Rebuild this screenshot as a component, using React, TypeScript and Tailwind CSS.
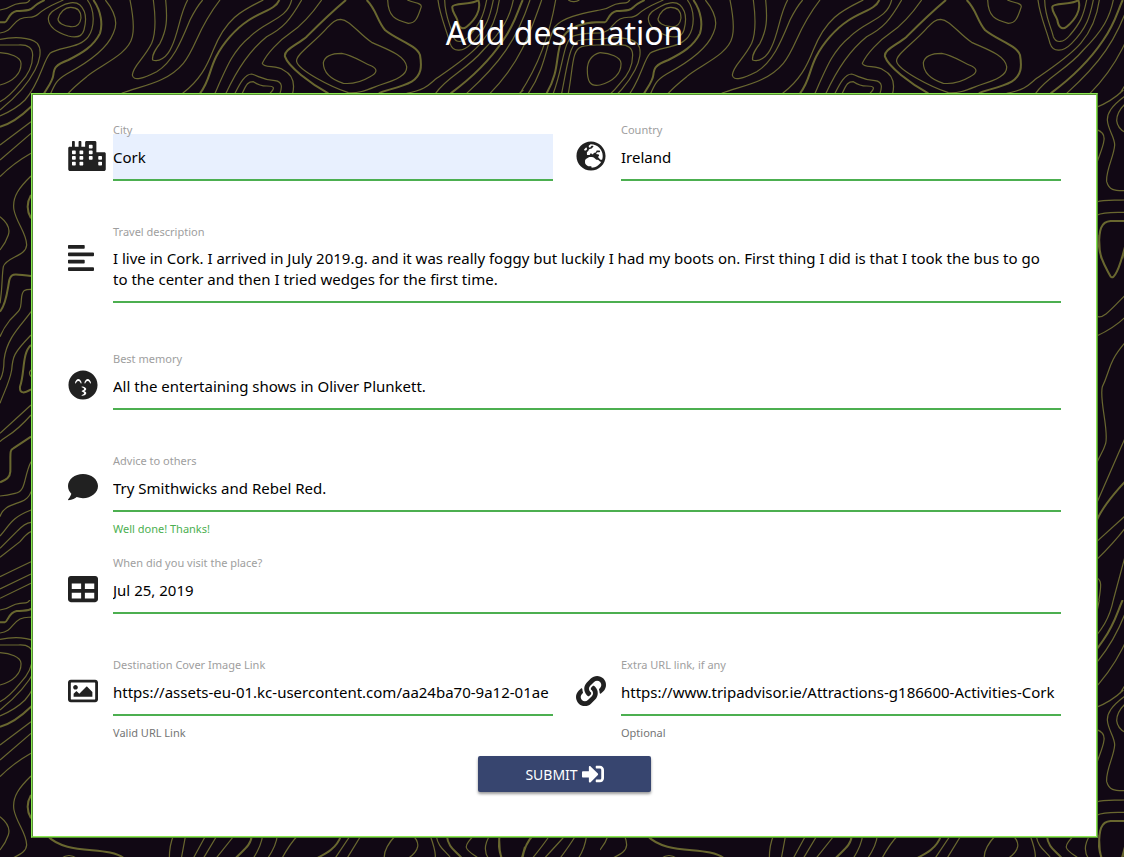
import type { ReactNode } from 'react';
import {
  FaAlignLeft,
  FaCity,
  FaComment,
  FaGlobeEurope,
  FaKissBeam,
  FaLink,
  FaRegImage,
  FaSignInAlt,
  FaTable,
} from 'react-icons/fa';

const thinLines = [
  // upper band
  'M0 30C40 25 30 12 60 10S80 8 90 0',
  'M0 99C35 96 35 70 60 57C85 45 95 60 115 42C140 20 165 12 190 0',
  'M174 57C180 36 195 22 212 22C235 22 243 36 243 54C240 75 230 82 212 80C190 78 174 69 174 57Z',
  'M145 57C145 39 162 30 180 20C200 8 225 3 240 15C258 32 260 60 252 90C246 112 228 114 205 108C175 99 147 82 145 57Z',
  'M0 118C40 110 90 110 112 130C128 150 118 185 105 210C85 250 50 290 0 330',
  'M0 135H55C85 133 98 145 98 165C98 200 85 225 60 250C40 275 20 295 0 305',
  'M0 158C30 160 62 170 63 190C64 220 40 245 0 255',
  'M0 348C30 335 55 320 75 300C120 250 130 180 150 160C180 140 240 145 265 110C285 80 285 30 262 0',
  'M316 0C345 35 355 70 340 100C320 150 260 190 200 222C170 240 165 250 150 285',
  'M390 0C400 50 402 90 397 110C385 165 300 195 260 230C235 250 220 262 203 282',
  'M460 0C468 60 468 100 455 130C430 180 400 195 397 225C400 245 430 235 470 215C520 185 545 120 570 60C580 40 590 20 608 0',
  'M497 0C503 60 500 90 480 130C465 150 455 165 458 180C475 187 500 175 515 140C535 100 540 40 563 0',
  'M365 280C420 258 500 250 550 190C590 140 590 90 660 0',
  'M548 280C600 240 620 200 640 150C680 50 730 30 790 0',
  'M645 280C680 200 700 150 750 110C800 60 860 60 875 0',
  'M678 280C710 210 750 150 800 110C850 85 870 60 905 0',
  'M965 0C930 50 900 80 870 100C840 120 800 160 787 190C790 205 830 195 850 210C880 225 885 250 878 280',
  'M705 280C720 250 735 222 755 222C780 230 790 240 825 242C850 245 845 265 840 280',
  'M727 280C740 250 745 245 760 245C775 255 785 258 800 258C825 258 825 265 810 280',
  'M1022 58C1050 60 1075 100 1115 127C1160 148 1215 165 1220 200C1222 225 1190 240 1140 255C1100 270 1080 280 1045 278C990 260 895 210 890 185C885 165 940 130 980 85C995 70 1005 58 1022 58Z',
  'M970 188C975 165 1000 160 1025 160C1060 165 1090 190 1115 198C1135 208 1130 220 1110 230C1080 248 1050 252 1030 250C1000 240 970 220 970 188Z',
  'M1163 0C1165 50 1185 60 1225 70C1250 70 1255 45 1264 20C1264 8 1245 10 1222 0',
  'M1334 0C1335 50 1350 70 1360 110C1368 130 1390 130 1410 105C1440 70 1450 50 1460 0',
  'M1314 0C1320 50 1340 90 1350 130C1360 160 1390 155 1415 130C1460 85 1470 50 1480 0',
  'M1220 280C1280 270 1290 250 1310 235C1400 170 1480 130 1498 0',
  'M1307 280C1340 230 1400 210 1450 150C1510 90 1530 50 1540 0',
  'M1400 280C1500 190 1550 120 1590 0',
  'M1470 280C1560 190 1590 100 1625 0',
  'M1560 280C1620 190 1650 100 1667 0',
  'M1585 280C1640 200 1640 120 1665 80C1690 50 1750 40 1800 30',
  'M1660 280C1690 200 1690 120 1720 108C1750 98 1770 100 1800 99',
  'M1685 280C1705 180 1710 120 1745 120C1765 116 1780 120 1800 118',
  'M1705 280C1720 200 1715 150 1745 140C1765 134 1780 135 1800 135',
  'M1800 158C1775 165 1762 180 1762 210C1762 240 1768 262 1800 255',
  'M1705 0C1715 8 1730 5 1738 0',
  // left edge
  'M0 435L93 365',
  'M0 480L93 400',
  'M0 530Q40 490 93 460',
  'M93 528C60 560 35 590 42 630C50 670 80 700 80 735C78 770 20 770 10 800C5 830 8 860 0 910',
  'M0 650C25 670 30 690 25 705C20 720 8 740 0 750',
  'M93 868C75 868 68 870 65 890C60 930 70 920 30 960Q10 985 0 1010',
  'M93 935C70 970 20 1010 12 1080C12 1120 5 1130 0 1140',
  'M93 1005C40 1060 38 1070 35 1110C28 1150 10 1180 0 1210',
  'M93 1110Q84 1118 93 1130',
  'M0 1300L93 1215',
  'M0 1325C20 1305 35 1310 93 1245',
  'M93 1385C70 1430 80 1475 45 1480C20 1486 10 1487 0 1488',
  'M0 1550C15 1500 80 1520 93 1475',
  'M0 1608C30 1575 30 1555 93 1530',
  'M0 1645L50 1595Q75 1568 93 1567',
  'M0 1672L60 1625Q80 1600 93 1595',
  'M0 1730Q30 1715 93 1685',
  'M0 1767L93 1722',
  'M0 1795L93 1750',
  // right edge
  'M1482 325Q1535 305 1570 270',
  'M1575 288C1532 320 1522 340 1522 360C1524 390 1544 410 1544 435C1542 470 1517 510 1520 545C1527 570 1542 573 1575 572',
  'M1575 312C1557 330 1550 345 1550 362C1552 380 1562 390 1575 397',
  'M1490 389C1507 395 1514 405 1512 420C1510 440 1500 460 1490 490',
  'M1490 606C1512 598 1542 602 1575 600',
  'M1490 646C1512 635 1542 638 1575 637',
  'M1490 948C1507 960 1532 930 1575 886',
  'M1490 1008Q1540 985 1575 952',
  'M1575 1028C1522 1090 1532 1110 1507 1160C1497 1200 1527 1290 1517 1330C1510 1355 1497 1370 1490 1390',
  'M1575 1315L1490 1510',
  'M1490 1625L1575 1548',
  'M1490 1679Q1540 1630 1575 1585',
  'M1490 1733C1504 1740 1506 1750 1494 1815',
  'M1540 1800L1575 1670',
  // lower band
  'M184 775Q207 758 230 775',
  'M521 705Q508 735 508 775',
  'M557 705L544 775',
  'M618 705L580 775',
  'M652 705L610 775',
  'M704 705L648 775',
  'M788 705Q785 735 760 775',
  'M832 705Q830 735 803 775',
  'M895 705Q870 730 846 775',
  'M1052 705L1005 775',
  'M1084 705L1041 775',
  'M1188 705Q1150 745 1153 775',
  'M1237 705Q1275 740 1225 775',
  'M1290 705Q1310 760 1305 775',
  'M1308 705C1315 745 1335 750 1353 775',
  'M1424 705C1380 745 1400 750 1436 775',
  'M1470 705Q1445 745 1465 775',
  'M1650 705Q1630 735 1597 775',
  'M1697 705Q1670 735 1633 775',
  'M1728 705Q1710 735 1680 775',
  'M1760 705Q1755 745 1735 775',
];

const thickLines = [
  'M0 67H14C25 65 24 38 50 33C75 30 85 36 102 20C112 10 120 8 134 0',
  'M280 0C305 35 308 75 300 100C280 140 245 160 205 180C165 195 162 205 160 225C158 245 140 265 130 285L93 320C60 352 30 372 0 380',
  'M600 280C640 230 620 190 690 110C760 30 820 40 838 0',
  'M1038 0C990 40 950 80 920 110C890 135 850 150 855 170C865 200 930 250 985 280',
  'M1100 0C1130 30 1130 60 1155 90C1190 120 1250 135 1260 165C1266 200 1265 225 1235 245C1200 265 1150 270 1137 280',
  'M1435 0C1445 30 1425 60 1400 80C1385 92 1375 80 1372 60C1365 40 1355 35 1357 20C1360 8 1420 15 1435 0Z',
  'M1352 280C1420 230 1470 180 1510 120C1545 70 1550 40 1568 0',
  'M1640 280C1680 210 1665 170 1685 120C1700 80 1760 64 1800 67',
  'M93 585Q73 620 93 655',
  'M0 935C20 910 22 870 28 840C35 815 50 825 93 828',
  'M93 1035C65 1060 75 1120 60 1160C58 1185 75 1178 93 1168',
  'M93 1310L40 1345C28 1350 32 1360 31 1415C30 1435 15 1440 0 1447',
  'M1575 663H1532C1502 665 1497 690 1497 740C1500 780 1522 810 1532 830C1542 840 1557 810 1575 740',
  'M1490 1562Q1510 1515 1575 1445',
  'M140 705C200 770 320 735 372 775',
  'M755 705C755 735 730 750 706 775',
  'M1024 705C1010 745 980 760 950 775',
  'M1340 705C1345 745 1365 750 1386 775',
  'M1498 705Q1496 745 1504 775',
  'M1600 705Q1575 730 1567 775',
];

function ContourBackground() {
  return (
    <svg className="absolute inset-0 h-full w-full" aria-hidden="true">
      <defs>
        <pattern id="contours" width="600" height="600" patternUnits="userSpaceOnUse" viewBox="0 0 1800 1800">
          <g fill="none" stroke="#69672f">
            <path d={thinLines.join('')} strokeWidth="3.6" />
            <path d={thickLines.join('')} strokeWidth="6" />
          </g>
        </pattern>
      </defs>
      <rect width="100%" height="100%" fill="url(#contours)" />
    </svg>
  );
}

type FieldProps = {
  id: string;
  label: string;
  icon: ReactNode;
  value: string;
  helper?: string;
  helperClass?: string;
  wide?: boolean;
  filled?: boolean;
  multiline?: boolean;
};

function Field({ id, label, icon, value, helper, helperClass = 'text-[#757575]', wide, filled, multiline }: FieldProps) {
  return (
    <div className={wide ? 'col-span-2 flex' : 'flex min-w-0'}>
      <div className="w-[45px] shrink-0 pt-[19px] text-[30px] text-[#212121]">{icon}</div>
      <div className="min-w-0 flex-1">
        <label htmlFor={id} className="relative block h-3 text-[11px] leading-4 text-[#9e9e9e]">
          {label}
        </label>
        {multiline ? (
          <textarea
            id={id}
            defaultValue={value}
            rows={2}
            className="block w-full resize-none overflow-hidden border-b-2 border-[#4caf50] pt-3 pr-2 pb-[11px] text-[15px] leading-[21px] text-black outline-none"
          />
        ) : (
          <input
            id={id}
            type="text"
            defaultValue={value}
            className={
              filled
                ? 'block h-[47px] w-full border-b-2 border-[#4caf50] bg-[#e8f0fe] text-[15px] text-black outline-none'
                : 'block h-[47px] w-full border-b-2 border-[#4caf50] text-[15px] text-black outline-none'
            }
          />
        )}
        <p className={`${multiline ? 'h-12' : 'h-[43px]'} pt-[9px] text-[11px] leading-4 ${helperClass}`}>{helper}</p>
      </div>
    </div>
  );
}

export default function App() {
  return (
    <div className="relative min-h-screen bg-[#110814] font-['Noto_Sans','Open_Sans',sans-serif]">
      <ContourBackground />
      <main className="relative pt-3 pr-[26px] pb-[19px] pl-[31px]">
        <h1 className="text-center text-[32px] leading-[42px] text-white">Add destination</h1>
        <form
          className="mt-[39px] border-2 border-[#8be652] bg-white px-[35px] pt-[27px] pb-11 [border-style:ridge]"
          onSubmit={(event) => event.preventDefault()}
        >
          <div className="grid grid-cols-2 gap-x-[23px]">
            <Field id="city" label="City" icon={<FaCity className="h-[30px] w-[38px]" />} value="Cork" filled />
            <Field id="country" label="Country" icon={<FaGlobeEurope />} value="Ireland" />
            <Field
              id="description"
              label="Travel description"
              icon={<FaAlignLeft className="h-[30px] w-[26px]" />}
              value="I live in Cork. I arrived in July 2019.g. and it was really foggy but luckily I had my boots on. First thing I did is that I took the bus to go to the center and then I tried wedges for the first time."
              wide
              multiline
            />
            <Field
              id="memory"
              label="Best memory"
              icon={<FaKissBeam />}
              value="All the entertaining shows in Oliver Plunkett."
              wide
            />
            <Field
              id="advice"
              label="Advice to others"
              icon={<FaComment />}
              value="Try Smithwicks and Rebel Red."
              helper="Well done! Thanks!"
              helperClass="text-[#4caf50]"
              wide
            />
            <Field id="visited" label="When did you visit the place?" icon={<FaTable />} value="Jul 25, 2019" wide />
            <Field
              id="cover"
              label="Destination Cover Image Link"
              icon={<FaRegImage />}
              value="https://assets-eu-01.kc-usercontent.com/aa24ba70-9a12-01ae"
              helper="Valid URL Link"
            />
            <Field
              id="extra"
              label="Extra URL link, if any"
              icon={<FaLink />}
              value="https://www.tripadvisor.ie/Attractions-g186600-Activities-Cork"
              helper="Optional"
            />
          </div>
          <button
            type="submit"
            className="mx-auto -mt-[3px] flex h-9 w-[173px] items-center justify-center gap-1 rounded-xs bg-[#37456f] text-[14px] text-white shadow-[0_2px_3px_rgba(0,0,0,0.4)]"
          >
            SUBMIT <FaSignInAlt className="text-[22px]" />
          </button>
        </form>
      </main>
    </div>
  );
}
